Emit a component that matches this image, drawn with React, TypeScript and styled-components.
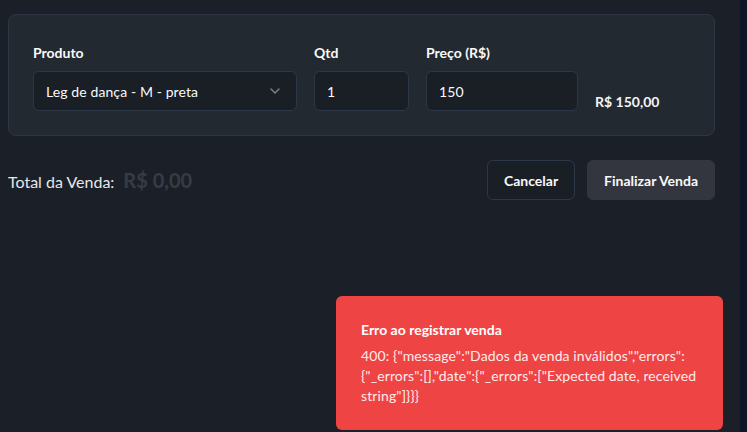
import React from "react";
import styled, { createGlobalStyle } from "styled-components";
import { ChevronDown } from "lucide-react";

const Global = createGlobalStyle`
  html, body { margin: 0; padding: 0; }
  body {
    background: #1b2028;
    font-family: Lato, "Open Sans", sans-serif;
    color: #f3f4f6;
    overflow: hidden;
  }
  * { box-sizing: border-box; }
`;

const Shell = styled.div`
  display: flex;
  width: 747px;
  height: 432px;
`;

const Main = styled.main`
  flex: 1;
  padding: 14px 25px 0 8px;
  background: #1b2028;
`;

const Edge = styled.div`
  width: 7px;
  background: #0f1627;
`;

const Card = styled.section`
  border: 1px solid #2c3644;
  border-radius: 8px;
  background: #232930;
  padding: 28px 24px 24px 24px;
`;

const Grid = styled.div`
  display: grid;
  grid-template-columns: 264px 95px 152px 1fr;
  column-gap: 17px;
`;

const Field = styled.div`
  display: flex;
  flex-direction: column;
  gap: 8px;
`;

const Label = styled.label`
  font-size: 14px;
  line-height: 20px;
  font-weight: 700;
  color: #f9fafb;
`;

const Control = styled.div`
  height: 40px;
  display: flex;
  align-items: center;
  justify-content: space-between;
  padding: 0 12px;
  border: 1px solid #2c3847;
  border-radius: 6px;
  background: #1a1f26;
  font-size: 14px;
  letter-spacing: 0.1px;
  color: #f9fafb;
`;

const Chevron = styled(ChevronDown)`
  color: #80868f;
  margin-right: 1px;
`;

const Subtotal = styled.div`
  align-self: end;
  font-size: 14px;
  line-height: 20px;
  font-weight: 700;
  color: #f3f4f6;
  margin-bottom: -1px;
`;

const Footer = styled.div`
  margin-top: 24px;
  display: flex;
  align-items: center;
  justify-content: space-between;
`;

const Total = styled.div`
  display: flex;
  align-items: baseline;
  gap: 9px;
  font-size: 16px;
  color: #e5e7eb;
`;

const TotalValue = styled.span`
  font-size: 20px;
  font-weight: 700;
  color: #373c44;
`;

const Actions = styled.div`
  display: flex;
  gap: 12px;
`;

const Button = styled.button<{ $primary?: boolean }>`
  height: 40px;
  padding: 0 16px;
  border-radius: 6px;
  font-family: inherit;
  font-size: 14px;
  font-weight: 700;
  color: #f9fafb;
  border: 1px solid ${(p) => (p.$primary ? "#33363f" : "#2c3847")};
  background: ${(p) => (p.$primary ? "#33363f" : "#1a1f26")};
`;

const Toast = styled.div`
  position: fixed;
  right: 24px;
  bottom: 2px;
  width: 387px;
  padding: 24px 24px 24px 25px;
  border-radius: 6px;
  background: #ef4444;
  color: #fff;
`;

const ToastTitle = styled.div`
  font-size: 14px;
  line-height: 20px;
  font-weight: 700;
`;

const ToastBody = styled.div`
  margin-top: 6px;
  font-size: 14px;
  letter-spacing: 0.12px;
  line-height: 20px;
  white-space: pre;
  opacity: 0.9;
`;

const errorText =
  '400: {"message":"Dados da venda inválidos","errors":\n{"_errors":[],"date":{"_errors":["Expected date, received\nstring"]}}}';

export default function App() {
  return (
    <Shell>
      <Global />
      <Main>
        <Card>
          <Grid>
            <Field>
              <Label>Produto</Label>
              <Control>
                <span>Leg de dança - M - preta</span>
                <Chevron size={16} />
              </Control>
            </Field>
            <Field>
              <Label>Qtd</Label>
              <Control>1</Control>
            </Field>
            <Field>
              <Label>Preço (R$)</Label>
              <Control>150</Control>
            </Field>
            <Subtotal>R$ 150,00</Subtotal>
          </Grid>
        </Card>
        <Footer>
          <Total>
            Total da Venda: <TotalValue>R$ 0,00</TotalValue>
          </Total>
          <Actions>
            <Button>Cancelar</Button>
            <Button $primary>Finalizar Venda</Button>
          </Actions>
        </Footer>
      </Main>
      <Edge />
      <Toast>
        <ToastTitle>Erro ao registrar venda</ToastTitle>
        <ToastBody>{errorText}</ToastBody>
      </Toast>
    </Shell>
  );
}
